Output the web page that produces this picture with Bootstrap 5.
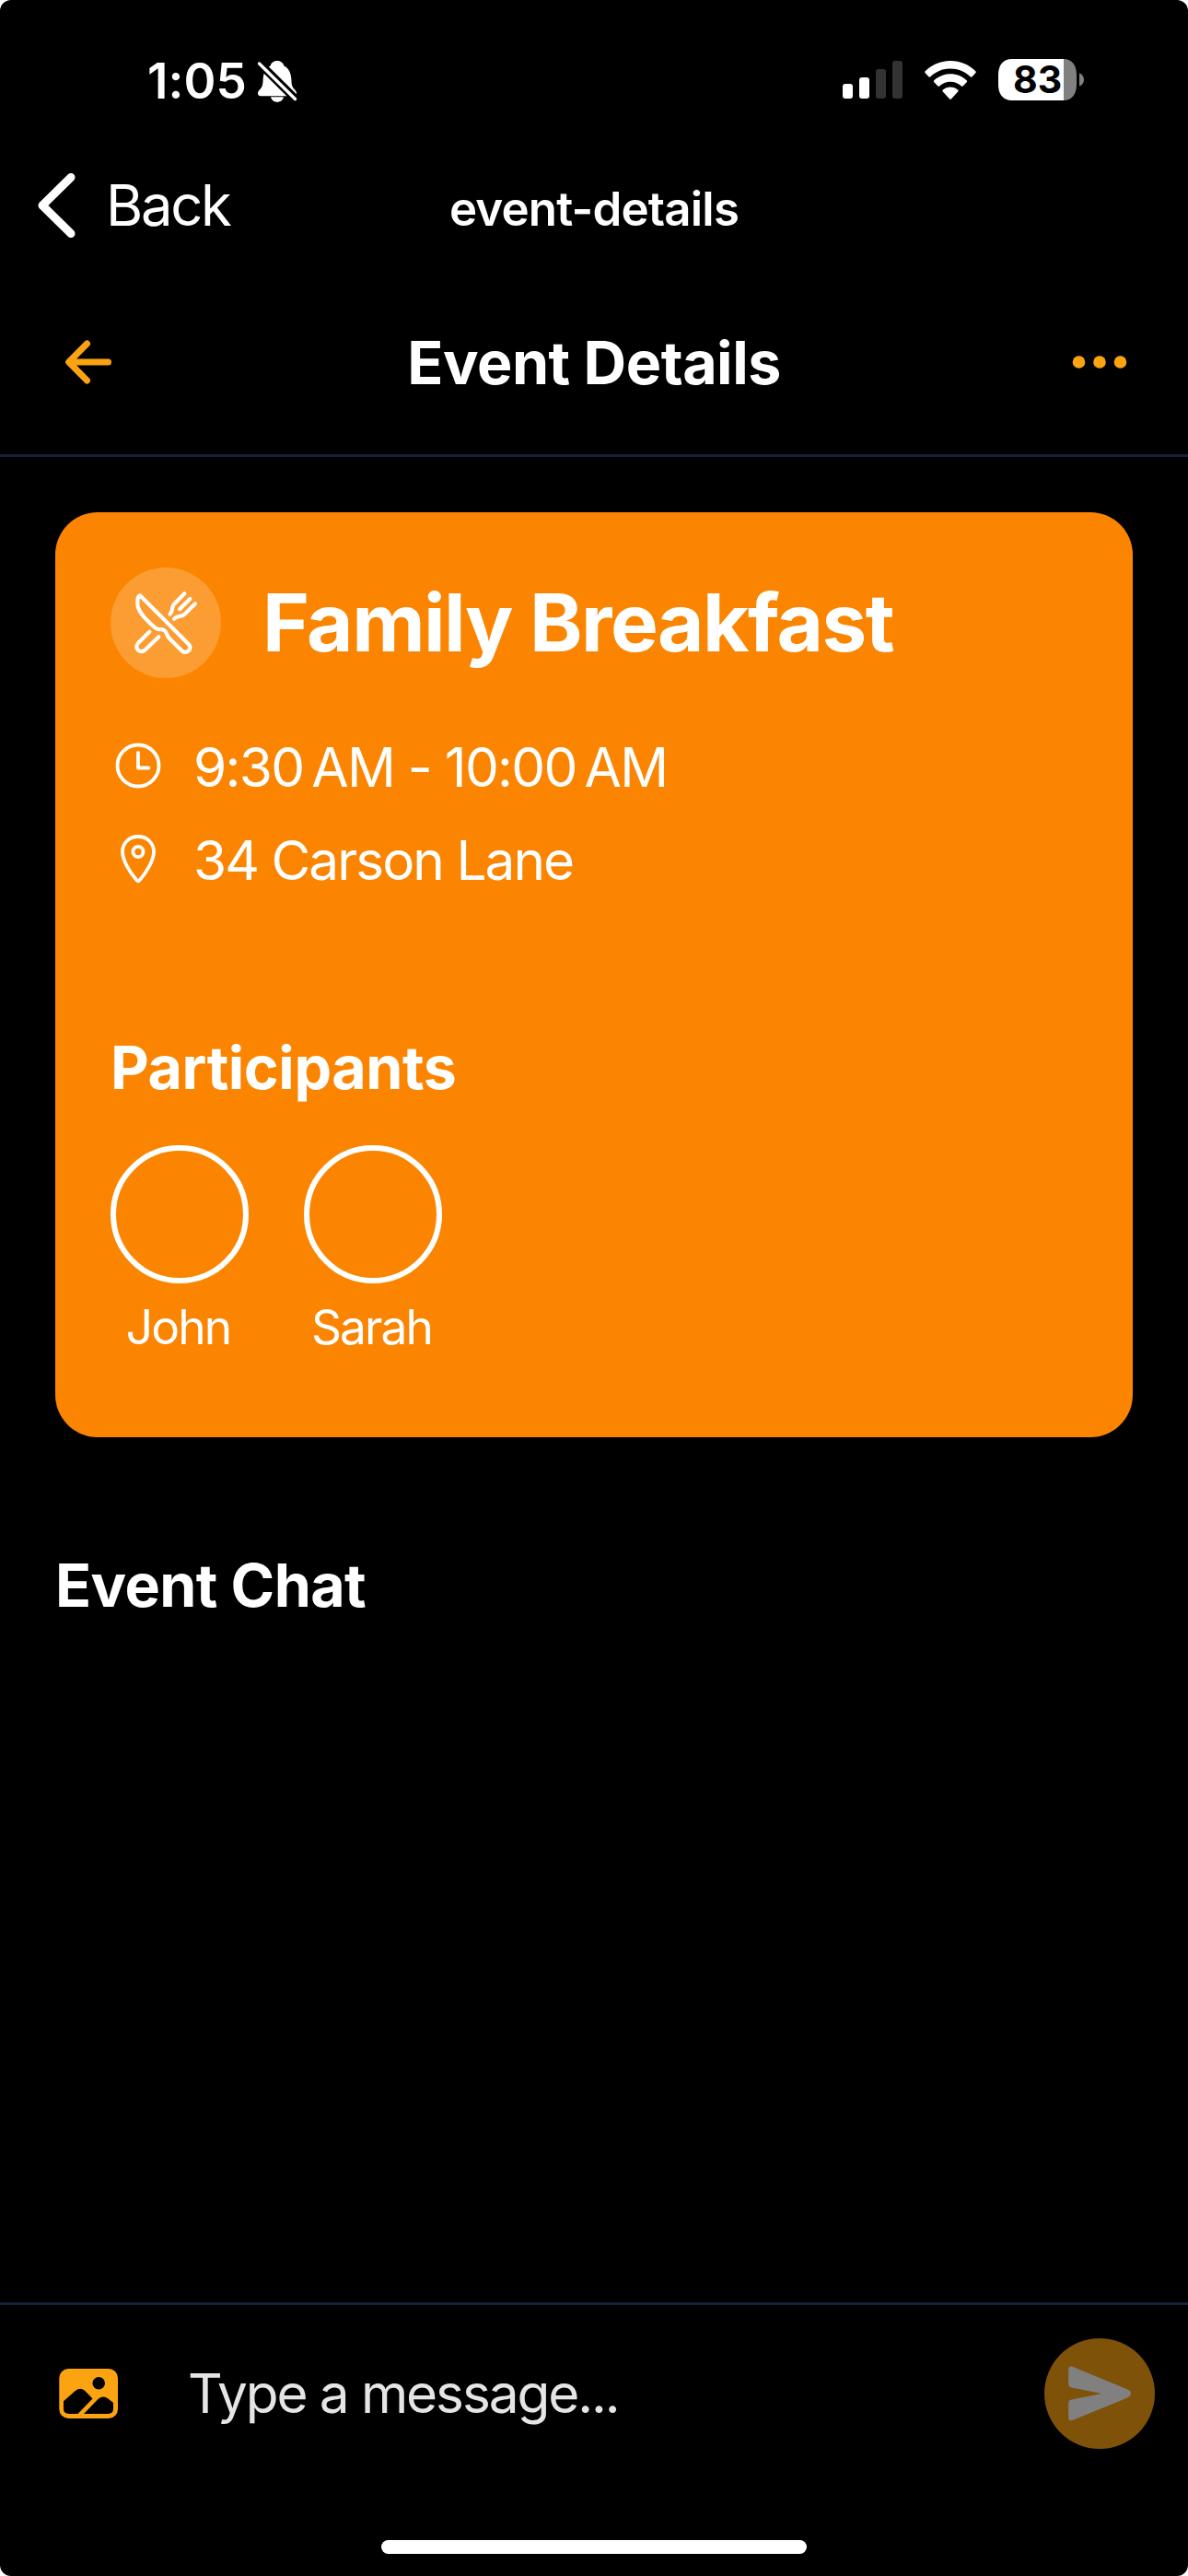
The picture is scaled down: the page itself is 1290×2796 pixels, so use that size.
<!DOCTYPE html>
<html lang="en">
<head>
<meta charset="utf-8">
<meta name="viewport" content="width=device-width, initial-scale=1">
<title>Event Details</title>
<link href="https://cdn.jsdelivr.net/npm/bootstrap@5.3.0/dist/css/bootstrap.min.css" rel="stylesheet">
<style>
  html { background: #fff; }
  body { background: #fff; font-family: Inter, "Liberation Sans", sans-serif; color: #fff; }
  svg { display: block; flex: none; }
  .phone { width: 1290px; height: 2796px; background: #000; border-radius: 12px; overflow: hidden; }
  .line { line-height: 80px; white-space: nowrap; }

  .status-bar { height: 176px; padding: 0 113px 0 160px; }
  .clock-text { font-size: 53px; font-weight: 600; letter-spacing: .1px; }
  .status-icons { padding-bottom: 3px; }
  .battery { width: 93px; height: 45px; }
  .battery-level { left: 0; top: 0; width: 86px; font-size: 41px; line-height: 45px; font-weight: 700; color: #000; padding-left: 16px; }

  .stack-nav { height: 94px; display: grid; grid-template-columns: 1fr auto 1fr; align-items: center; padding: 0 40px; }
  .back-text { font-size: 61.5px; letter-spacing: -2.3px; margin-left: 33px; }
  .route-name { font-size: 51px; font-weight: 600; letter-spacing: -.8px; padding-top: 7px; }

  .page-head { height: 226px; padding: 23px 60px 0 60px; border-bottom: 3px solid #14213d; }
  .page-head h1, .event-card h2, .event-card h3, .chat-title { margin: 0; font-weight: 700; }
  .page-head h1 { font-size: 64.5px; letter-spacing: -.46px; padding-top: 1px; }

  .event-card { margin: 60px 60px 0; height: 1004px; padding: 60px; background: #fb8500; border: 0; border-radius: 46px; color: #fff; }
  .event-icon { width: 120px; height: 120px; background: rgba(255,255,255,.2); }
  .event-card h2 { font-size: 87px; letter-spacing: -1.5px; line-height: 120px; margin-left: 45px; }
  .facts { margin-top: 56px; gap: 20px; }
  .fact { height: 81px; gap: 30px; font-size: 58.5px; line-height: 81px; }
  .fact-time { letter-spacing: -1.7px; }
  .fact-place { letter-spacing: -1.95px; }
  .event-card h3 { font-size: 64.5px; letter-spacing: -.44px; margin-top: 145px; line-height: 80px; }
  .people { gap: 60px; margin-top: 44px; }
  .person { width: 150px; font-size: 51.5px; letter-spacing: -1.9px; }
  .person .line { padding-right: 3px; }
  .avatar { width: 150px; height: 150px; border: 6px solid #fff; margin-bottom: 7px; }

  .chat-title { font-size: 64.5px; letter-spacing: -.6px; margin: 121px 60px 0; }

  .composer { height: 297px; border-top: 3px solid #14213d; }
  .composer-row { height: 156px; padding: 36px 36px 0 60px; }
  .message { font-size: 58.5px; letter-spacing: -2.1px; color: #e5e5e5; margin-left: 72px; }
  .send { width: 120px; height: 120px; background: #fca311; opacity: .5; border: 0; }
  .home-bar { width: 462px; height: 15px; border-radius: 8px; background: #fff; margin-bottom: 24px; }
</style>
</head>
<body>
<main class="phone d-flex flex-column">
  <div class="status-bar d-flex align-items-center justify-content-between">
    <div class="d-flex align-items-center">
      <span class="clock-text line">1:05</span>
      <svg class="ms-2" width="50" height="50" viewBox="277 63 50 50">
        <path fill="#fff" d="M302 66c-4.200 0-6.800 2.800-7.200 5.200-5.500 2.800-7.800 8-8.200 15.500-.3 5.500-.6 7.500-3.600 10.500-1.500 1.600-2 2.800-2 4 0 1.800 1.200 3 3.200 3h35.500c2 0 3.300-1.200 3.300-3 0-1.200-.5-2.400-2-4-3-3-3.300-5-3.600-10.500-.4-7.500-2.700-12.700-8.200-15.500-.4-2.400-3-5.200-7.200-5.200z"/>
        <path fill="#fff" d="M295 105.300h14c-.8 3.300-3.500 5.500-7 5.500s-6.200-2.200-7-5.500z"/>
        <path stroke="#000" stroke-width="9" d="M280 66l44 43.500"/>
        <path stroke="#fff" stroke-width="3.400" stroke-linecap="round" d="M282.500 69l39 38.500"/>
      </svg>
    </div>
    <div class="status-icons d-flex align-items-center">
      <svg width="65" height="41" viewBox="0 0 65 41">
        <rect x="0" y="25" width="11" height="16" rx="3" fill="#fff"/>
        <rect x="18" y="18" width="11" height="23" rx="3" fill="#fff"/>
        <rect x="36" y="9" width="11" height="32" rx="3" fill="#333"/>
        <rect x="54" y="0" width="11" height="41" rx="3" fill="#333"/>
      </svg>
      <svg class="mx-4" width="56" height="42" viewBox="0 0 58 42" preserveAspectRatio="none" fill="#fff">
        <path d="M29 0C18 0 8 4.200.700 11.200c-.6.600-.6 1.500 0 2.100l3.900 4c.6.600 1.400.6 2 0C12.600 11.600 20.400 8.600 29 8.600s16.400 3 22.400 8.700c.6.600 1.400.6 2 0l3.900-4c.6-.6.600-1.500 0-2.100C50 4.200 40 0 29 0z"/>
        <path d="M29 14.200c-7 0-13.400 2.600-18.300 7-.6.600-.7 1.500 0 2.100l4 4c.6.600 1.300.6 1.900.1 3.400-3 7.700-4.700 12.400-4.700s9 1.700 12.400 4.700c.6.500 1.300.5 1.900-.1l4-4c.7-.6.600-1.500 0-2.100-4.900-4.400-11.300-7-18.300-7z"/>
        <path d="M29 28.400c-3.200 0-6.100 1.100-8.400 3-.7.600-.7 1.500-.1 2.100l7.400 7.700c.6.700 1.600.7 2.200 0l7.400-7.700c.6-.6.600-1.500-.1-2.100-2.300-1.900-5.200-3-8.400-3z"/>
      </svg>
      <div class="battery position-relative">
        <svg width="93" height="45" viewBox="0 0 93 45">
          <path fill="#fff" d="M15 0H71V45H15C5 45 0 38 0 28V17C0 7 5 0 15 0z"/>
          <path fill="#808080" d="M71 0C80 0 85 7 85 17V28C85 38 80 45 71 45z"/>
          <path fill="#808080" d="M88 15.500c3.300 1 5 3.700 5 7s-1.700 6-5 7z"/>
        </svg>
        <span class="battery-level position-absolute">83</span>
      </div>
    </div>
  </div>

  <nav class="stack-nav">
    <div class="d-flex align-items-center">
      <svg width="42" height="72" viewBox="40 187 42 72" fill="none" stroke="#fff" stroke-width="9" stroke-linecap="round" stroke-linejoin="round"><path d="M77 192.500L46 223l31 30.500"/></svg>
      <span class="back-text line">Back</span>
    </div>
    <span class="route-name line">event-details</span>
    <span></span>
  </nav>

  <header class="page-head d-flex align-items-center justify-content-between">
    <svg width="72" height="72" viewBox="0 0 72 72" fill="none" stroke="#fca311" stroke-width="7" stroke-linecap="round" stroke-linejoin="round"><path d="M34.500 16L14.700 36l19.800 20M57.500 36H15.500"/></svg>
    <h1 class="line">Event Details</h1>
    <svg width="72" height="72" viewBox="1158 357 72 72" fill="#fca311"><circle cx="1171.500" cy="393" r="6.800"/><circle cx="1194" cy="393" r="6.800"/><circle cx="1216.500" cy="393" r="6.800"/></svg>
  </header>

  <section class="event-card card">
    <div class="d-flex align-items-center">
      <div class="event-icon rounded-circle">
        <svg width="120" height="120" viewBox="-30 -42 360 360" fill="none" stroke="#fff" stroke-width="12.500" stroke-linecap="round" stroke-linejoin="round">
          <path d="M66 49L224 207C231 214 231 223 224 229C217 236 208 235 202 229L161 188C151 177 155 170 146 163C136 155 129 163 119 157C97 140 60 105 58 78C57 62 60 50 66 49z"/>
          <path d="M97 167L60 204C53 212 54 221 60 227C67 233 76 232 83 226L127 184"/>
          <path d="M211 43L177 77C167 88 176 96 164 110M229 60L195 94M246 76L211 110C200 121 190 112 177 125"/>
        </svg>
      </div>
      <h2 class="text-nowrap">Family Breakfast</h2>
    </div>
    <div class="facts d-flex flex-column">
      <div class="fact d-flex">
        <svg width="60" height="60" viewBox="120 800.700 60 60" style="margin-top:9px" fill="none" stroke="#fff" stroke-width="3.800" stroke-linecap="round" stroke-linejoin="round"><circle cx="150" cy="830.700" r="22.500"/><path d="M150 816.500v16.700h11.500"/></svg>
        <span class="fact-time text-nowrap">9:30&#8239;AM - 10:00&#8239;AM</span>
      </div>
      <div class="fact d-flex">
        <svg width="60" height="60" viewBox="120 902 60 60" style="margin-top:9px" fill="none" stroke="#fff" stroke-width="3.800" stroke-linecap="round" stroke-linejoin="round"><path d="M150 908c-9.800 0-17 7.200-17 16.500 0 9.500 8.500 23 15.500 31 .9 1 2.100 1 3 0 7-8 15.500-21.500 15.500-31 0-9.300-7.200-16.500-17-16.500z"/><circle cx="150" cy="924.500" r="5.600"/></svg>
        <span class="fact-place text-nowrap">34 Carson Lane</span>
      </div>
    </div>
    <h3>Participants</h3>
    <div class="people d-flex">
      <div class="person text-center"><div class="avatar rounded-circle"></div><div class="line">John</div></div>
      <div class="person text-center"><div class="avatar rounded-circle"></div><div class="line">Sarah</div></div>
    </div>
  </section>

  <h2 class="chat-title line">Event Chat</h2>

  <footer class="composer mt-auto d-flex flex-column justify-content-between">
    <div class="composer-row d-flex align-items-center">
      <svg width="72" height="72" viewBox="60 2562 72 72">
        <rect x="64.300" y="2571" width="63.700" height="54" rx="10" fill="#fca311"/>
        <circle cx="107.200" cy="2586.800" r="6.800" fill="#000"/>
        <path fill="#000" d="M69 2606.300L81.500 2595.200Q87 2590.600 92 2594.700L100.500 2603.500L84.500 2620H75Q69 2619.800 69 2614.500z"/>
        <path fill="#000" d="M91 2620L106.500 2604Q112 2599.600 117 2603.300L123 2608V2614.500Q123 2619.800 117.500 2620z"/>
      </svg>
      <span class="message line">Type a message...</span>
      <button class="send rounded-circle p-0 ms-auto" type="button" aria-label="Send">
        <svg width="120" height="120" viewBox="1134 2538 120 120" fill="#fff"><path d="M1160.200 2572Q1160.200 2567.500 1164.500 2568.800L1225 2593.800Q1228 2595.400 1228 2598Q1228 2600.600 1225 2602.200L1164.500 2627Q1160.200 2628.300 1160.200 2624V2608.500Q1160.200 2605 1163.700 2604.400L1196.500 2598L1163.700 2591.500Q1160.200 2591 1160.200 2587.500z"/></svg>
      </button>
    </div>
    <div class="home-bar mx-auto"></div>
  </footer>
</main>
<script src="https://cdn.jsdelivr.net/npm/bootstrap@5.3.0/dist/js/bootstrap.bundle.min.js"></script>
</body>
</html>
